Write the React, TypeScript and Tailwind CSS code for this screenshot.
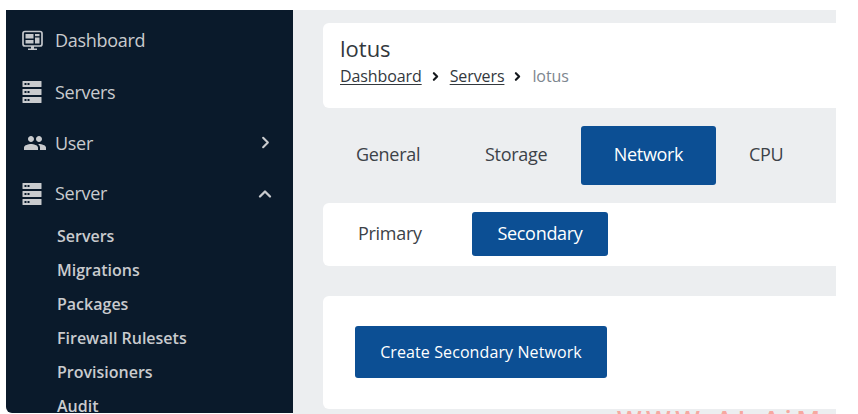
import { ChevronRight, ChevronUp } from 'lucide-react';
import { MdPeople } from 'react-icons/md';

function MonitorIcon() {
  return (
    <svg width="21" height="22" viewBox="0 0 21 22" className="shrink-0">
      <rect x="1" y="1.5" width="19" height="14.5" rx="2" fill="none" stroke="#c4c7cb" strokeWidth="1.7" />
      <rect x="3.5" y="4" width="8" height="4.5" fill="#c4c7cb" />
      <rect x="3.5" y="10" width="8" height="3.5" fill="#c4c7cb" />
      <rect x="13" y="4" width="4.5" height="2.2" fill="#c4c7cb" />
      <rect x="13" y="7.5" width="4.5" height="6" fill="#c4c7cb" />
      <path d="M9 16h3v2.5h3V20H6v-1.5h3z" fill="#c4c7cb" />
    </svg>
  );
}

function ServerIcon() {
  return (
    <svg width="20" height="24" viewBox="0 0 20 24" className="shrink-0">
      <g fill="#c9cbce">
        <rect x="0.5" y="1" width="19" height="6" rx="0.5" />
        <rect x="0.5" y="9" width="19" height="6" rx="0.5" />
        <rect x="0.5" y="17" width="19" height="6" rx="0.5" />
      </g>
      <g fill="#0a1a2b">
        <rect x="2.5" y="3" width="2" height="2" />
        <rect x="5.5" y="3" width="2" height="2" />
        <rect x="2.5" y="11" width="2" height="2" />
        <rect x="5.5" y="11" width="2" height="2" />
        <rect x="2.5" y="19" width="2" height="2" />
        <rect x="5.5" y="19" width="2" height="2" />
      </g>
    </svg>
  );
}

const subItems = ['Servers', 'Migrations', 'Packages', 'Firewall Rulesets', 'Provisioners', 'Audit'];

export default function App() {
  return (
    <div className="relative w-[858px] h-[414px] overflow-hidden bg-white pt-[10px] pl-[6px] pr-[22px] flex font-['Open_Sans',sans-serif]">
      {/* Sidebar */}
      <aside className="w-[287px] h-[403px] shrink-0 bg-[#0a1a2b] rounded-bl-md text-[#c9cbce] pl-[16px] pr-[19px] pt-[5px]">
        <div className="flex items-center gap-[12px] h-[51px] text-[18px]">
          <MonitorIcon />
          <span className="leading-none -mt-[1px] tracking-[-0.3px]">Dashboard</span>
        </div>
        <div className="flex items-center gap-[13px] h-[51px] text-[18px]">
          <ServerIcon />
          <span className="leading-none tracking-[-0.3px]">Servers</span>
        </div>
        <div className="flex items-center h-[51px] text-[18px]">
          <MdPeople size={24} className="shrink-0 ml-[1px] mr-[8px]" />
          <span className="flex-1 leading-none tracking-[-0.3px]">User</span>
          <ChevronRight size={19} strokeWidth={2.6} className="-mr-[1px]" />
        </div>
        <div className="flex items-center gap-[13px] h-[51px] text-[18px]">
          <ServerIcon />
          <span className="flex-1 leading-none -mt-[1px] tracking-[-0.3px]">Server</span>
          <ChevronUp size={20} strokeWidth={2.8} className="-mr-[1px]" />
        </div>
        <ul className="pl-[35px] text-[16px] font-semibold">
          {subItems.map((item) => (
            <li key={item} className="h-[34px] flex items-center leading-none">{item}</li>
          ))}
        </ul>
      </aside>

      {/* Main */}
      <main className="flex-1 bg-[#eceef0] pl-[30px] pt-[13px] min-w-0">
        <div className="bg-white rounded-l-md h-[85px] pl-[17px] pt-[9px]">
          <h1 className="text-[22px] leading-[32px] text-[#33383d]">lotus</h1>
          <div className="flex items-center mt-[1px] text-[16px] leading-[22px] text-[#33383d] tracking-[-0.1px]">
            <a className="underline underline-offset-2">Dashboard</a>
            <ChevronRight size={13} strokeWidth={4} className="ml-[7px] mr-[8px] text-[#15191d]" />
            <a className="underline underline-offset-2">Servers</a>
            <ChevronRight size={13} strokeWidth={4} className="ml-[7px] mr-[8px] text-[#15191d]" />
            <span className="text-[#7d868f]">lotus</span>
          </div>
        </div>

        <nav className="flex items-center h-[59px] mt-[18px] text-[18px] text-[#3c4248] tracking-[-0.3px]">
          <span className="pl-[33px] w-[129px] -mt-[2px]">General</span>
          <span className="w-[129px] pl-[33px] -mt-[2px]">Storage</span>
          <span className="w-[135px] h-full pb-[2px] flex items-center justify-center bg-[#0c4f94] text-white rounded-[3px]">Network</span>
          <span className="pl-[33px] -mt-[2px]">CPU</span>
        </nav>

        <div className="bg-white rounded-l-md h-[63px] mt-[18px] flex items-center text-[18px] tracking-[-0.3px] pb-[1px]">
          <span className="pl-[35px] w-[149px] text-[#3c4248] -mt-[2px]">Primary</span>
          <span className="w-[136px] h-[44px] pb-[2px] flex items-center justify-center bg-[#0c4f94] text-white rounded-[3px]">Secondary</span>
        </div>

        <div className="bg-white rounded-l-md h-[113px] mt-[30px] pl-[32px] pt-[30px]">
          <button className="w-[252px] h-[52px] bg-[#0c4f94] text-white rounded-[3px] text-[16px] tracking-[0.1px]">
            Create Secondary Network
          </button>
        </div>
      </main>

      {/* Watermark clipped by the bottom edge */}
      <span className="absolute left-[617px] top-[404px] text-[26px] leading-[30px] font-semibold tracking-[4.5px] text-[#f7a8a0] whitespace-nowrap">
        WWW.AI-AiM
      </span>
    </div>
  );
}
